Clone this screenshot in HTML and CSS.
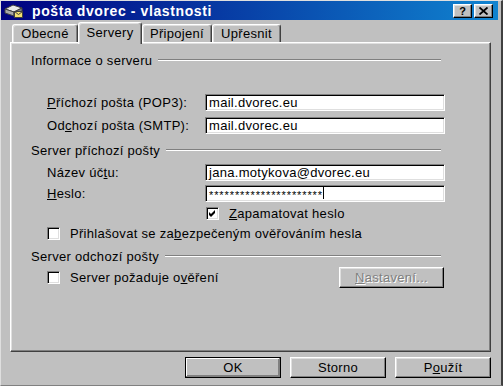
FILE: index.html
```html
<!DOCTYPE html>
<html lang="cs">
<head>
    <meta charset="UTF-8">
    <meta name="viewport" content="width=device-width, initial-scale=1.0">
    <title>pošta dvorec - vlastnosti</title>
    <link rel="stylesheet" href="styles.css">
</head>
<body>
    <div class="window">
        <div class="titlebar">
            <svg class="app-icon" width="20" height="14" viewBox="0 0 20 14">
                <polygon points="1,5 9,1 18,4 10,8" fill="#e8e8e8" stroke="#404040" stroke-width="1"/>
                <polygon points="1,5 10,8 10,12 1,9" fill="#a8a8a8" stroke="#404040" stroke-width="1"/>
                <polygon points="10,8 18,4 18,8 10,12" fill="#808080" stroke="#404040" stroke-width="1"/>
                <rect x="10.5" y="7.5" width="8" height="6" fill="#f4e070" stroke="#404040" stroke-width="1"/>
                <polyline points="10.5,7.5 14.5,10.5 18.5,7.5" fill="none" stroke="#404040" stroke-width="1"/>
            </svg>
            <span class="title">pošta dvorec - vlastnosti</span>
            <div class="title-buttons">
                <div class="tbtn help">?</div>
                <div class="tbtn close">
                    <svg width="9" height="8" viewBox="0 0 9 8">
                        <path d="M0.5 0.5 L8.5 7.5 M8.5 0.5 L0.5 7.5" stroke="#000" stroke-width="1.8" fill="none"/>
                    </svg>
                </div>
            </div>
        </div>

        <div class="content">
            <div class="tabs">
                <div class="tab tab-obecne">Obecné</div>
                <div class="tab tab-servery active">Servery</div>
                <div class="tab tab-pripojeni">Připojení</div>
                <div class="tab tab-upresnit">Upřesnit</div>
            </div>

            <div class="panel">
                <div class="group-title">
                    <span>Informace o serveru</span>
                    <div class="rule"></div>
                </div>
                <div class="row indent first">
                    <label class="label"><u>P</u>říchozí pošta (POP3):</label>
                    <div class="field">mail.dvorec.eu</div>
                </div>
                <div class="row indent r2">
                    <label class="label">Od<u>c</u>hozí pošta (SMTP):</label>
                    <div class="field">mail.dvorec.eu</div>
                </div>

                <div class="group-title g2">
                    <span>Server příchozí pošty</span>
                    <div class="rule"></div>
                </div>
                <div class="row indent r3">
                    <label class="label">Název úč<u>t</u>u:</label>
                    <div class="field">jana.motykova@dvorec.eu</div>
                </div>
                <div class="row indent r4">
                    <label class="label"><u>H</u>eslo:</label>
                    <div class="field"><span class="stars">**********************</span><span class="caret"></span></div>
                </div>
                <div class="row check-row remember">
                    <div class="checkbox">
                        <svg width="7" height="7" viewBox="0 0 7 7">
                            <polygon points="0,2 2,4 6,0 6,3 2,7 0,5" fill="#000"/>
                        </svg>
                    </div>
                    <span><u>Z</u>apamatovat heslo</span>
                </div>
                <div class="row indent check-row">
                    <div class="checkbox"></div>
                    <span>Přihlašovat se za<u>b</u>ezpečeným ověřováním hesla</span>
                </div>

                <div class="group-title g3">
                    <span>Server odchozí pošty</span>
                    <div class="rule"></div>
                </div>
                <div class="row indent check-row r7">
                    <div class="checkbox"></div>
                    <span>Server požaduje o<u>v</u>ěření</span>
                    <button class="btn settings" disabled><u>N</u>astavení...</button>
                </div>
            </div>

            <div class="buttons">
                <button class="btn default">OK</button>
                <button class="btn">Storno</button>
                <button class="btn">P<u>o</u>užít</button>
            </div>
        </div>
    </div>
</body>
</html>
```

FILE: styles.css
```css
body {
    margin: 0;
    background-color: #c0c0c0;
    font-family: "Liberation Sans", Arial, sans-serif;
    font-size: 13px;
    letter-spacing: 0.3px;
    color: #000;
}

.window {
    width: 503px;
    height: 386px;
    box-sizing: border-box;
    background-color: #c0c0c0;
    border-top: 1px solid #dfdfdf;
    border-left: 1px solid #dfdfdf;
    border-right: 2px solid #404040;
    border-bottom: 1px solid #808080;
    padding-right: 3px;
}

.titlebar {
    height: 19px;
    display: flex;
    align-items: center;
    padding: 0 5px 0 3px;
    background: linear-gradient(to right, #000080, #1084d0);
    color: #fff;
}

.app-icon {
    margin-right: 8px;
}

.title {
    font-weight: bold;
    font-size: 14px;
    letter-spacing: 0.6px;
}

.title-buttons {
    margin-left: auto;
    display: flex;
    gap: 2px;
}

.tbtn {
    width: 19px;
    height: 14px;
    box-sizing: border-box;
    background-color: #c0c0c0;
    border: 1px solid;
    border-color: #fff #000 #000 #fff;
    box-shadow: inset -1px -1px #808080, inset 1px 1px #dfdfdf;
    display: flex;
    align-items: center;
    justify-content: center;
    color: #000;
    font-weight: bold;
    font-size: 11px;
    letter-spacing: 0;
}

.content {
    padding: 0 7px 0 9px;
}

.tabs {
    display: flex;
    align-items: flex-end;
    height: 22px;
    margin-top: 2px;
    margin-bottom: -2px;
    padding-left: 2px;
    position: relative;
    z-index: 1;
}

.tab {
    height: 18px;
    margin-bottom: 2px;
    box-sizing: border-box;
    border: 1px solid;
    border-color: #fff #404040 transparent #fff;
    border-bottom: none;
    border-radius: 3px 3px 0 0;
    box-shadow: inset -1px 0 #808080, inset 1px 1px #dfdfdf;
    background-color: #c0c0c0;
    display: flex;
    align-items: center;
    justify-content: center;
}

.tab.active {
    height: 22px;
    margin-bottom: 0;
    padding-bottom: 3px;
}

.tab-obecne { width: 66px; }
.tab-servery { width: 64px; }
.tab-pripojeni { width: 70px; }
.tab-upresnit { width: 69px; }

.panel {
    height: 310px;
    box-sizing: border-box;
    border: 1px solid;
    border-color: #fff #404040 #404040 #fff;
    box-shadow: inset -1px -1px #808080, inset 1px 1px #dfdfdf;
    padding: 7px 45px 0 20px;
}

.group-title {
    display: flex;
    align-items: center;
    height: 20px;
    padding-right: 4px;
}

.rule {
    flex: 1;
    margin-left: 6px;
    border-top: 1px solid #808080;
    border-bottom: 1px solid #fff;
}

.g2 { margin-top: 5px; }
.g3 { margin-top: 3px; }

.row {
    display: flex;
    align-items: center;
    height: 20px;
}

.row.indent {
    padding-left: 16px;
}

.first { margin-top: 22px; }
.r2 { margin-top: 3px; }
.r3 { margin-top: 2px; }
.r4 { margin-top: 1px; }
.r7 { margin-top: 1px; }

.label {
    width: 158px;
}

.field {
    flex: 1;
    height: 17px;
    box-sizing: border-box;
    background-color: #fff;
    border: 1px solid;
    border-color: #808080 #fff #fff #808080;
    box-shadow: inset 1px 1px #000, inset -1px -1px #dfdfdf;
    padding-left: 3px;
    display: flex;
    align-items: center;
    white-space: nowrap;
}

.stars {
    font-size: 11px;
    letter-spacing: 0.9px;
    line-height: 11px;
    padding-top: 4px;
}

.caret {
    width: 1px;
    height: 12px;
    background-color: #000;
}

.check-row span {
    margin-left: 10px;
}

.remember {
    padding-left: 175px;
}

.checkbox {
    width: 13px;
    height: 13px;
    box-sizing: border-box;
    background-color: #fff;
    border: 1px solid;
    border-color: #808080 #fff #fff #808080;
    box-shadow: inset 1px 1px #000, inset -1px -1px #dfdfdf;
    display: flex;
    align-items: center;
    justify-content: center;
}

.btn {
    height: 21px;
    box-sizing: border-box;
    background-color: #c0c0c0;
    border: 1px solid;
    border-color: #fff #000 #000 #fff;
    box-shadow: inset -1px -1px #808080, inset 1px 1px #dfdfdf;
    font-family: "Liberation Sans", Arial, sans-serif;
    font-size: 13px;
    letter-spacing: 0.3px;
    color: #000;
    padding: 0;
}

.btn.default {
    border-color: #000;
    box-shadow: inset -1px -1px #808080, inset 1px 1px #fff, inset -2px -2px #808080;
}

.settings {
    width: 105px;
    margin-left: auto;
    margin-right: 1px;
    color: #808080;
    text-shadow: 1px 1px #fff;
}

.buttons {
    display: flex;
    justify-content: flex-end;
    gap: 9px;
    margin-top: 5px;
}

.buttons .btn {
    width: 96px;
}
```
